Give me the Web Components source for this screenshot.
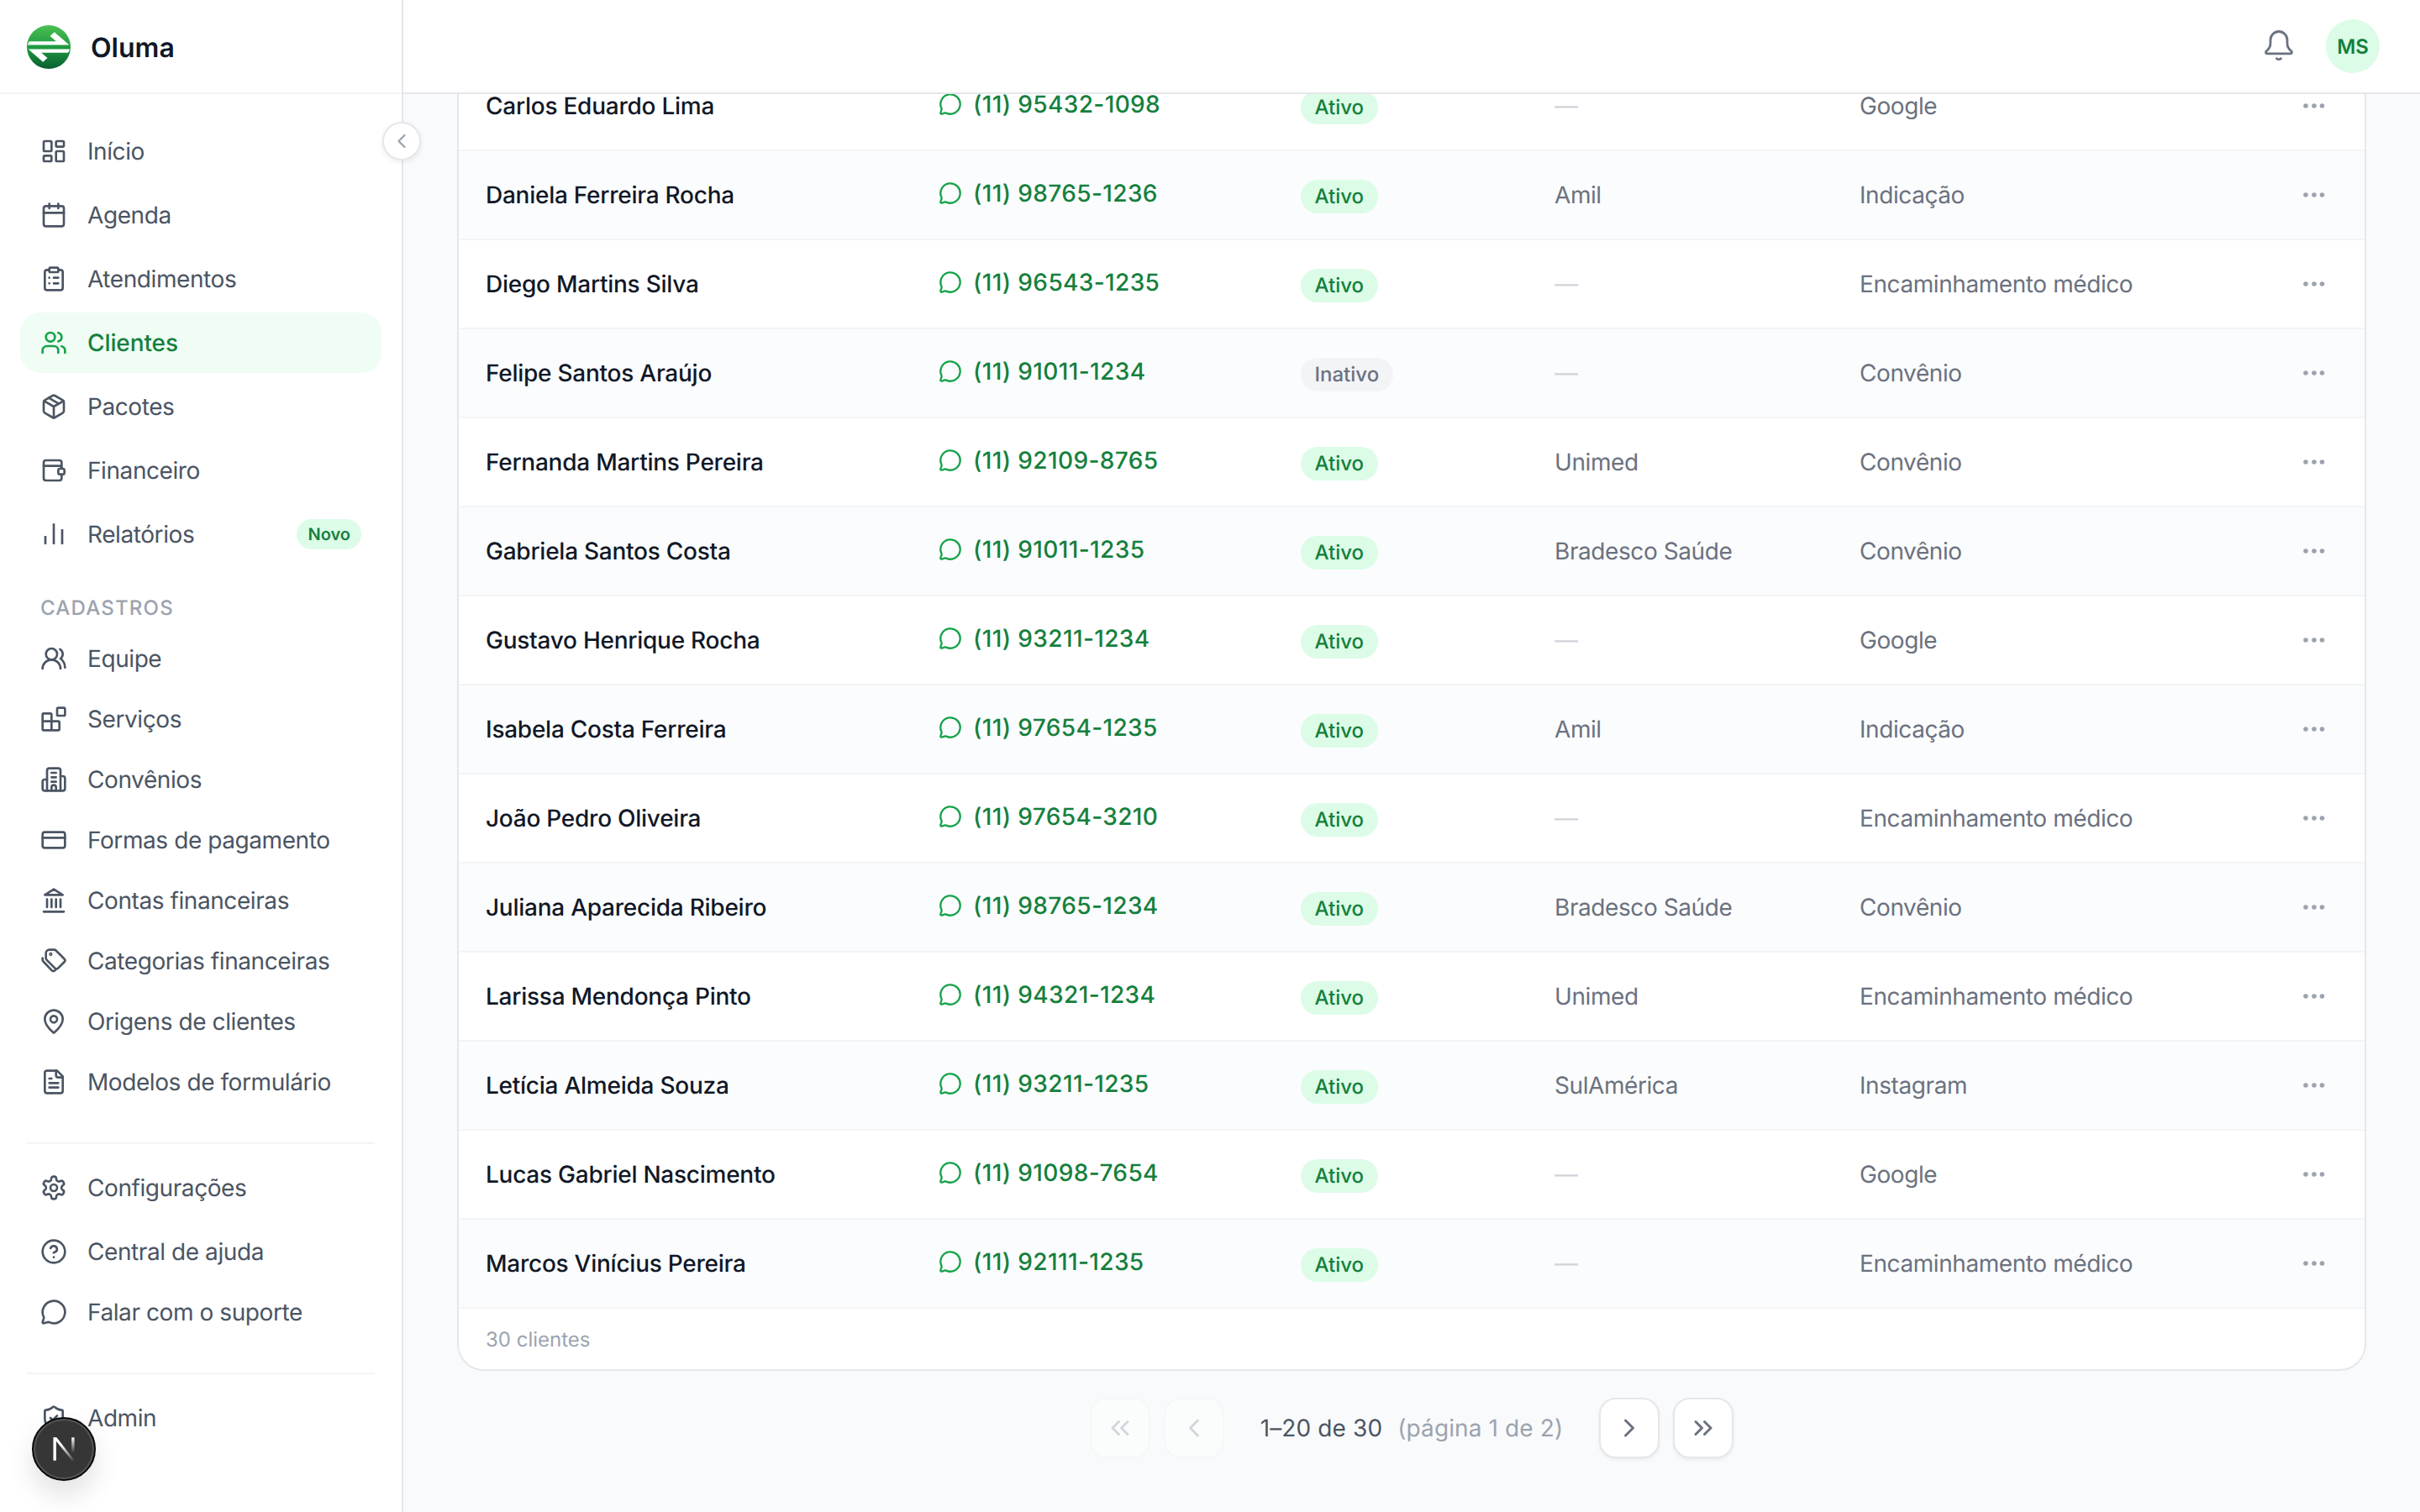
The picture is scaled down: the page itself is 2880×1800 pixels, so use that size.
<!DOCTYPE html>
<html lang="pt-BR"><head><meta charset="utf-8"><title>Oluma - Clientes</title>
<style>
html,body{margin:0;height:100%;background:#f9fafb;overflow:hidden}
body{font-family:Inter,"Liberation Sans",sans-serif;text-rendering:geometricPrecision;font-optical-sizing:none;-webkit-font-smoothing:antialiased}
</style></head><body>
<app-shell>
  <side-bar slot="side">
    <nav-group>
      <nav-item icon="home" label="Início"></nav-item>
      <nav-item icon="cal" label="Agenda"></nav-item>
      <nav-item icon="clip" label="Atendimentos"></nav-item>
      <nav-item icon="users" label="Clientes" active></nav-item>
      <nav-item icon="box" label="Pacotes"></nav-item>
      <nav-item icon="wallet" label="Financeiro"></nav-item>
      <nav-item icon="bars" label="Relatórios" badge="Novo"></nav-item>
    </nav-group>
    <nav-label>CADASTROS</nav-label>
    <nav-group compact>
      <nav-item compact icon="team" label="Equipe"></nav-item>
      <nav-item compact icon="blocks" label="Serviços"></nav-item>
      <nav-item compact icon="hosp" label="Convênios"></nav-item>
      <nav-item compact icon="card" label="Formas de pagamento"></nav-item>
      <nav-item compact icon="bank" label="Contas financeiras"></nav-item>
      <nav-item compact icon="tags" label="Categorias financeiras"></nav-item>
      <nav-item compact icon="pin" label="Origens de clientes"></nav-item>
      <nav-item compact icon="file" label="Modelos de formulário"></nav-item>
    </nav-group>
    <nav-rule></nav-rule>
    <nav-group>
      <nav-item icon="gear" label="Configurações"></nav-item>
      <nav-item icon="help" label="Central de ajuda"></nav-item>
      <nav-item icon="chat" label="Falar com o suporte" tight></nav-item>
    </nav-group>
    <nav-rule last></nav-rule>
    <nav-group><nav-item icon="shield" label="Admin"></nav-item></nav-group>
  </side-bar>
  <top-bar slot="top"></top-bar>
  <client-table slot="main"></client-table>
  <page-nav slot="main"></page-nav>
</app-shell>
<dev-badge></dev-badge>
<script>
const ICONS={
home:'<rect x="3" y="3" width="7" height="9" rx="1"/><rect x="14" y="3" width="7" height="5" rx="1"/><rect x="14" y="12" width="7" height="9" rx="1"/><rect x="3" y="16" width="7" height="5" rx="1"/>',
cal:'<path d="M8 2v4M16 2v4"/><rect x="3" y="4" width="18" height="18" rx="2"/><path d="M3 10h18"/>',
clip:'<rect x="8" y="2" width="8" height="4" rx="1"/><path d="M16 4h2a2 2 0 0 1 2 2v14a2 2 0 0 1-2 2H6a2 2 0 0 1-2-2V6a2 2 0 0 1 2-2h2"/><path d="M12 11h4M12 16h4M8 11h.01M8 16h.01"/>',
users:'<path d="M16 21v-2a4 4 0 0 0-4-4H6a4 4 0 0 0-4 4v2"/><circle cx="9" cy="7" r="4"/><path d="M22 21v-2a4 4 0 0 0-3-3.87M16 3.13a4 4 0 0 1 0 7.75"/>',
box:'<path d="M11 21.73a2 2 0 0 0 2 0l7-4A2 2 0 0 0 21 16V8a2 2 0 0 0-1-1.73l-7-4a2 2 0 0 0-2 0l-7 4A2 2 0 0 0 3 8v8a2 2 0 0 0 1 1.73z"/><path d="M12 22V12M3.3 7l8.7 5 8.7-5M7.5 4.27l9 5.15"/>',
wallet:'<path d="M19 9V5a2 2 0 0 0-2-2H5a2 2 0 0 0-2 2v14a2 2 0 0 0 2 2h12a2 2 0 0 0 2-2v-3"/><path d="M3 8h14a2 2 0 0 1 2 2"/><rect x="16" y="10.5" width="5.5" height="5" rx="1.5"/>',
bars:'<g stroke-linecap="butt"><path d="M4.5 21v-7.5M12 21V2.5M19.5 21V7.5"/></g>',
team:'<path d="M18 21a8 8 0 0 0-16 0"/><circle cx="10" cy="8" r="5"/><path d="M22 20c0-3.37-2-6.5-4-8a5 5 0 0 0-.45-8.3"/>',
blocks:'<rect x="15" y="2" width="7" height="7" rx="1"/><path d="M10 22V8a1 1 0 0 0-1-1H3a1 1 0 0 0-1 1v13a1 1 0 0 0 1 1h13a1 1 0 0 0 1-1v-6a1 1 0 0 0-1-1H2"/>',
hosp:'<path d="M6 22V4a2 2 0 0 1 2-2h8a2 2 0 0 1 2 2v18Z"/><path d="M6 12H4a2 2 0 0 0-2 2v6a2 2 0 0 0 2 2h2M18 9h2a2 2 0 0 1 2 2v9a2 2 0 0 1-2 2h-2M10 6h4M10 10h4M10 14h4M10 22v-3a2 2 0 0 1 4 0v3"/>',
card:'<rect x="2" y="5" width="20" height="14" rx="2"/><path d="M2 10h20"/>',
bank:'<path d="M3 22h18M6 18v-7M10 18v-7M14 18v-7M18 18v-7M12 2l8 5H4z"/>',
tags:'<path d="M8 2h4.500a2 2 0 0 1 1.400.6l7.500 7.500a2 2 0 0 1 0 2.800l-5.600 5.600a2 2 0 0 1-2.800 0L5.600 11a2 2 0 0 1-.6-1.400V5a3 3 0 0 1 3-3z"/><path d="M2 9.500v1.500a2 2 0 0 0 .6 1.400l7.500 8a2 2 0 0 0 2.900.1l.5-.5"/><circle cx="9.300" cy="6" r=".6"/>',
pin:'<path d="M20 10c0 4.993-5.539 10.193-7.399 11.799a1 1 0 0 1-1.202 0C9.539 20.193 4 14.993 4 10a8 8 0 0 1 16 0"/><circle cx="12" cy="10" r="3"/>',
file:'<path d="M15 2H6a2 2 0 0 0-2 2v16a2 2 0 0 0 2 2h12a2 2 0 0 0 2-2V7Z"/><path d="M14 2v4a2 2 0 0 0 2 2h4M10 9H8M16 13H8M16 17H8"/>',
gear:'<path d="M12.220 2h-.44a2 2 0 0 0-2 2v.18a2 2 0 0 1-1 1.730l-.43.25a2 2 0 0 1-2 0l-.15-.08a2 2 0 0 0-2.730.73l-.22.38a2 2 0 0 0 .73 2.730l.15.1a2 2 0 0 1 1 1.720v.51a2 2 0 0 1-1 1.740l-.15.09a2 2 0 0 0-.73 2.730l.22.38a2 2 0 0 0 2.730.73l.15-.08a2 2 0 0 1 2 0l.43.25a2 2 0 0 1 1 1.730V20a2 2 0 0 0 2 2h.44a2 2 0 0 0 2-2v-.18a2 2 0 0 1 1-1.730l.43-.25a2 2 0 0 1 2 0l.15.08a2 2 0 0 0 2.730-.73l.22-.39a2 2 0 0 0-.73-2.730l-.15-.08a2 2 0 0 1-1-1.740v-.5a2 2 0 0 1 1-1.740l.15-.09a2 2 0 0 0 .73-2.730l-.22-.38a2 2 0 0 0-2.730-.73l-.15.08a2 2 0 0 1-2 0l-.43-.25a2 2 0 0 1-1-1.730V4a2 2 0 0 0-2-2z"/><circle cx="12" cy="12" r="3"/>',
help:'<circle cx="12" cy="12" r="10"/><path d="M9.090 9a3 3 0 0 1 5.830 1c0 2-3 3-3 3M12 17h.01"/>',
chat:'<path d="M2.992 16.342a2 2 0 0 1 .094 1.167l-1.065 3.290a1 1 0 0 0 1.236 1.168l3.413-.998a2 2 0 0 1 1.099.092 10 10 0 1 0-4.777-4.719"/>',
shield:'<path d="M20 13c0 5-3.500 7.500-7.660 8.950a1 1 0 0 1-.67-.01C7.500 20.500 4 18 4 13V6a1 1 0 0 1 1-1c2 0 4.500-1.200 6.240-2.720a1.170 1.170 0 0 1 1.520 0C14.510 3.810 17 5 19 5a1 1 0 0 1 1 1z"/><path d="m9 12 2 2 4-4"/>',
bell:'<path d="M12 1.500a6 6 0 0 0-6 6v2.500c0 2.500-1 4-3 5.600a1 1 0 0 0 .6 1.700h16.800a1 1 0 0 0 .6-1.700c-2-1.600-3-3.100-3-5.600V7.500a6 6 0 0 0-6-6z"/><path d="M10.500 20.800c.8.8 2.200.8 3 0"/>',
left:'<path d="m15 18-6-6 6-6"/>',
right:'<path d="m9 18 6-6-6-6"/>',
dleft:'<path d="m11 17-5-5 5-5M18 17l-5-5 5-5"/>',
dright:'<path d="m6 17 5-5-5-5M13 17l5-5-5-5"/>'
};
const svg=(n,s,w=2)=>`<svg xmlns="http://www.w3.org/2000/svg" width="${s}" height="${s}" viewBox="0 0 24 24" fill="none" stroke="currentColor" stroke-width="${w}" stroke-linecap="round" stroke-linejoin="round" style="display:block;flex:none">${ICONS[n]}</svg>`;
function def(name,css,html,init){
  customElements.define(name,class extends HTMLElement{
    connectedCallback(){
      if(this.shadowRoot)return;
      const r=this.attachShadow({mode:'open'});
      r.innerHTML=`<style>${css}</style>`+(typeof html==='function'?html(this):html);
      if(init)init(this,r);
    }
  });
}
def('app-shell',`:host{display:grid;grid-template-columns:480px 1fr;grid-template-rows:112px 1fr;height:1800px;overflow:hidden;background:#f9fafb;color:#111827}
.s{display:block;grid-row:1/3;grid-column:1;position:relative;z-index:3}
.t{display:block;grid-row:1;grid-column:2;position:relative;z-index:2}
.m{grid-row:2;grid-column:2;overflow:hidden;padding:0 64px;min-height:0}
.i{margin-top:-40px}`,
`<div class="s"><slot name="side"></slot></div><div class="t"><slot name="top"></slot></div><div class="m"><div class="i"><slot name="main"></slot></div></div>`);
def('side-bar',`:host{display:block;height:1800px;box-sizing:border-box;background:#fff;border-right:2px solid #e5e7eb;position:relative;overflow:visible}
header{height:112px;box-sizing:border-box;border-bottom:2px solid #f3f4f6;display:flex;align-items:center;padding:2px 0 0 32px;gap:24px;font-size:32px;font-weight:600;color:#111827}
nav{padding:32px 24px 0;display:flex;flex-direction:column}
button{position:absolute;left:455px;top:145px;width:46px;height:46px;border-radius:50%;padding:0;background:#fff;border:2px solid #e5e7eb;box-shadow:0 2px 6px rgba(0,0,0,.08);color:#9ca3af;display:flex;align-items:center;justify-content:center}`,
`<header><svg width="52" height="52" viewBox="0 0 50 50" style="flex:none;display:block"><defs><linearGradient id="g" x1="0" y1="0" x2="0" y2="1"><stop offset="0" stop-color="#4cc053"/><stop offset=".5" stop-color="#1f9a41"/><stop offset="1" stop-color="#0a5f30"/></linearGradient></defs><circle cx="25" cy="25" r="25" fill="url(#g)"/><path fill="#fff" d="M1 22.500Q1.500 19.500 3 18.500L33.500 18.500 26.500 12.500 31.500 8 46 20.500Q47.500 22 48.500 22.500Z"/><path fill="#fff" d="M49 27.500Q48.500 30.500 47 31.500L16.500 31.500 23.500 37.500 18.500 42 4 29.500Q2.500 28 1.500 27.500Z"/></svg><span>Oluma</span></header>
<nav><slot></slot></nav><button aria-label="Recolher">${svg('left',28,2)}</button>`);
def('nav-group',`:host{display:flex;flex-direction:column;gap:4px}`,`<slot></slot>`);
def('nav-label',`:host{display:block;height:36px;line-height:36px;margin:34px 0 8px;padding-left:24px;font-size:24px;font-weight:500;letter-spacing:1.2px;color:#9ca3af}`,`<slot></slot>`);
def('nav-rule',`:host{display:block;height:2px;background:#f3f4f6;margin:38px 8px 16px}
:host([last]){margin:36px 8px 16px}`,``);
def('nav-item',`:host{display:flex;align-items:center;height:72px;gap:24px;padding:0 24px;border-radius:24px;color:#4b5563;font-size:28px;box-sizing:border-box;letter-spacing:-.42px}
:host([compact]){height:68px}
:host([tight]){margin-top:-4px}
:host([active]){background:#f0fdf4;color:#15803d;font-weight:500;letter-spacing:-.1px}
:host([active]) .ic{color:#16a34a}
.ic{width:32px;height:32px;flex:none}
.l{flex:1;white-space:nowrap}
.b{height:36px;line-height:36px;padding:0 13px;border-radius:18px;background:#dcfce7;color:#15803d;font-size:20px;font-weight:600;letter-spacing:0}`,
h=>`<span class="ic">${svg(h.getAttribute('icon'),32,2)}</span><span class="l">${h.getAttribute('label')}</span>${h.hasAttribute('badge')?`<span class="b">${h.getAttribute('badge')}</span>`:''}`);
def('top-bar',`:host{display:flex;align-items:center;justify-content:flex-end;height:112px;box-sizing:border-box;background:#fff;border-bottom:2px solid #e5e7eb;padding:0 48px 0 0;gap:36px}
.bell{color:#6b7280}
.av{width:64px;height:64px;border-radius:50%;background:#dcfce7;color:#15803d;display:flex;align-items:center;justify-content:center;font-size:24px;font-weight:600}`,
`<span class="bell">${svg('bell',40,1.7)}</span><span class="av">MS</span>`);
const DATA=[
['Carlos Eduardo Lima','(11) 95432-1098','Ativo','—','Google'],
['Daniela Ferreira Rocha','(11) 98765-1236','Ativo','Amil','Indicação'],
['Diego Martins Silva','(11) 96543-1235','Ativo','—','Encaminhamento médico'],
['Felipe Santos Araújo','(11) 91011-1234','Inativo','—','Convênio'],
['Fernanda Martins Pereira','(11) 92109-8765','Ativo','Unimed','Convênio'],
['Gabriela Santos Costa','(11) 91011-1235','Ativo','Bradesco Saúde','Convênio'],
['Gustavo Henrique Rocha','(11) 93211-1234','Ativo','—','Google'],
['Isabela Costa Ferreira','(11) 97654-1235','Ativo','Amil','Indicação'],
['João Pedro Oliveira','(11) 97654-3210','Ativo','—','Encaminhamento médico'],
['Juliana Aparecida Ribeiro','(11) 98765-1234','Ativo','Bradesco Saúde','Convênio'],
['Larissa Mendonça Pinto','(11) 94321-1234','Ativo','Unimed','Encaminhamento médico'],
['Letícia Almeida Souza','(11) 93211-1235','Ativo','SulAmérica','Instagram'],
['Lucas Gabriel Nascimento','(11) 91098-7654','Ativo','—','Google'],
['Marcos Vinícius Pereira','(11) 92111-1235','Ativo','—','Encaminhamento médico']];
def('client-table',`:host{display:block;background:#fff;border:2px solid #e5e7eb;border-radius:32px;overflow:hidden}
.f{height:72px;box-sizing:border-box;padding-left:32px;display:flex;align-items:center;font-size:24px;color:#9ca3af}`,
`<div id="r"></div><div class="f">30 clientes</div>`,
(h,r)=>{const c=r.getElementById('r');DATA.forEach((d,i)=>{const e=document.createElement('client-row');
['name','phone','status','plan','origin'].forEach((k,j)=>e.setAttribute(k,d[j]));if(i%2)e.setAttribute('tint','');c.appendChild(e);});});
def('status-pill',`:host{display:inline-flex;align-items:center;height:40px;padding:0 16.5px;border-radius:20px;font-size:24px;font-weight:500;background:#dcfce7;color:#15803d}
:host([off]){background:#f3f4f6;color:#6b7280}`,`<slot></slot>`);
def('client-row',`:host{display:grid;grid-template-columns:539px 431px 302px 363px 1fr 120px;height:106px;box-sizing:border-box;border-bottom:2px solid #f3f4f6;align-items:center;font-size:28px;background:#fff}
:host([tint]){background:#fbfcfd}
.c{padding-left:32px;white-space:nowrap}
.n{color:#111827;font-weight:500;letter-spacing:-.25px}
.p{color:#15803d;display:flex;align-items:center;gap:13px;font-weight:500;margin-top:-4px;letter-spacing:.37px}
.p svg{color:#16a34a}
.s{margin-top:3px;display:flex}
.g{color:#6b7280;letter-spacing:-.42px}
.d{color:#d1d5db}
.a{display:flex;justify-content:center}`,
h=>{const a=k=>h.getAttribute(k),pl=a('plan');return `<div class="c n">${a('name')}</div><div class="c p">${svg('chat',28,2)}<span>${a('phone')}</span></div><div class="c s"><status-pill ${a('status')==='Inativo'?'off':''}>${a('status')}</status-pill></div><div class="c ${pl==='—'?'d':'g'}">${pl}</div><div class="c g">${a('origin')}</div><div class="a"><svg width="32" height="12" viewBox="0 0 32 12" fill="#9ca3af" style="display:block"><circle cx="6" cy="6" r="2.800"/><circle cx="16" cy="6" r="2.800"/><circle cx="25.500" cy="6" r="2.800"/></svg></div>`;});
def('page-btn',`:host{display:flex;align-items:center;justify-content:center;width:72px;height:72px;box-sizing:border-box;background:#fff;border:2px solid #e5e7eb;border-radius:20px;color:#6b7280;box-shadow:0 2px 4px rgba(0,0,0,.06)}
:host([off]){opacity:.4;color:#9ca3af;border-color:#f3f4f6;box-shadow:none}`,h=>svg(h.getAttribute('icon'),36,2));
def('page-nav',`:host{display:flex;align-items:center;justify-content:center;gap:16px;margin-top:32px;font-size:28px;color:#4b5563;letter-spacing:.12px}
.t{margin:0 27px;white-space:nowrap;display:flex;gap:18px}
.m{color:#9ca3af}`,
`<page-btn icon="dleft" off></page-btn><page-btn icon="left" off></page-btn><div class="t"><span>1–20 de 30</span><span class="m">(página 1 de 2)</span></div><page-btn icon="right"></page-btn><page-btn icon="dright"></page-btn>`);
def('dev-badge',`:host{position:fixed;left:38px;bottom:37px;width:76px;height:76px;border-radius:50%;z-index:9;box-sizing:border-box;background:#363636;border:2px solid #0a0a0a;box-shadow:inset 0 0 0 2px #555,0 16px 32px rgba(0,0,0,.12);display:flex;align-items:center;justify-content:center}`,
`<svg width="32" height="32" viewBox="0 0 28 28" fill="none" style="display:block"><defs><linearGradient id="a" x1="8" y1="6" x2="25" y2="27" gradientUnits="userSpaceOnUse"><stop offset=".2" stop-color="#fff"/><stop offset="1" stop-color="#fff" stop-opacity="0"/></linearGradient><linearGradient id="b" x1="0" y1="2" x2="0" y2="18" gradientUnits="userSpaceOnUse"><stop stop-color="#fff"/><stop offset="1" stop-color="#fff" stop-opacity="0"/></linearGradient></defs><path d="M3 2h3v24H3z" fill="#fff"/><path d="M3 2h3.500L25 25.500 23 27z" fill="url(#a)"/><path d="M22 2h3v18h-3z" fill="url(#b)"/></svg>`);
</script>
</body></html>
